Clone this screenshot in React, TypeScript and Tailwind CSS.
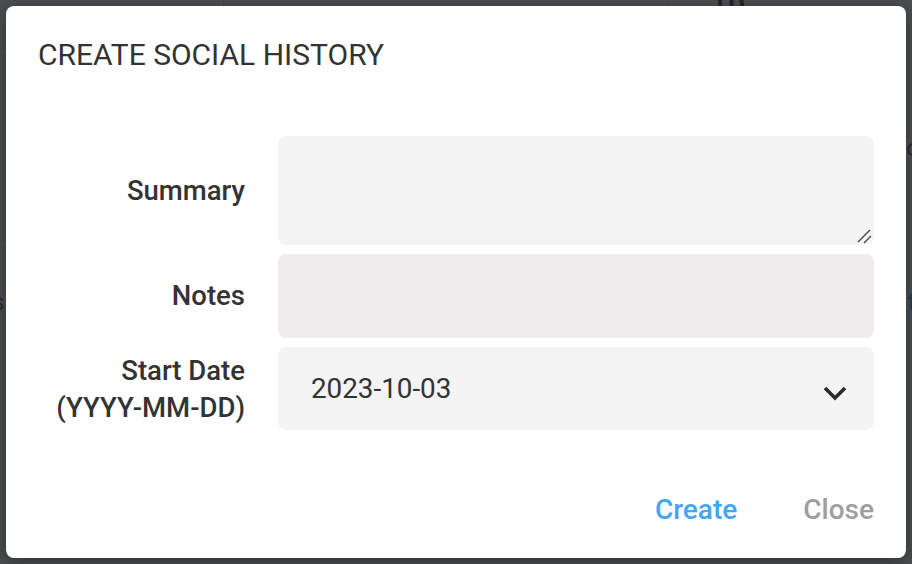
import { useState } from 'react';

const fields = [
  { label: 'Summary', kind: 'textarea', h: 'h-[109px]' },
  { label: 'Notes', kind: 'disabled', h: 'h-[84px]' },
];

function Chevron() {
  return (
    <svg width="26" height="16" viewBox="0 0 26 16" className="mt-[8px] text-[#2b2b2b]">
      <path d="M3 3 L13 13 L23 3" fill="none" stroke="currentColor" strokeWidth="3.6" />
    </svg>
  );
}

function Grip() {
  return (
    <svg width="16" height="16" viewBox="0 0 16 16" className="pointer-events-none absolute bottom-[1px] right-[2px] text-[#444444]">
      <path d="M2 14 L14 2 M8 15 L15 8" fill="none" stroke="currentColor" strokeWidth="1.4" />
    </svg>
  );
}

export default function App() {
  const [summary, setSummary] = useState('');

  return (
    <div className="relative h-[564px] w-[912px] overflow-hidden bg-[#4b4d51] font-['Roboto',sans-serif]">
      {/* page behind the backdrop */}
      <div className="absolute left-[223px] top-0 h-[6px] w-px bg-[#43454a]" />
      <div className="absolute left-[668px] top-0 h-[6px] w-px bg-[#43454a]" />
      <div className="absolute left-[712px] top-[-14px] text-[26px] font-bold text-[#232427]">TD</div>
      <div className="absolute left-0 top-[55px] h-px w-[6px] bg-[#45474b]" />
      <div className="absolute left-0 top-[240px] h-px w-[6px] bg-[#45474b]" />
      <div className="absolute left-[-8px] top-[284px] text-[24px] text-[#2d2e31]">s</div>
      <div className="absolute right-[-8px] top-[130px] text-[24px] text-[#2d2e31]">o</div>
      <div className="absolute right-[-4px] top-[284px] text-[24px] font-bold text-[#1e3d5c]">t</div>

      {/* dialog */}
      <div className="absolute inset-[6px] flex flex-col rounded-[8px] bg-white px-8 shadow-[0_4px_16px_rgba(0,0,0,0.35)]">
        <h2 className="pt-[33px] text-[30px] leading-[32px] font-normal text-[#333333]">
          CREATE SOCIAL HISTORY
        </h2>

        <div className="mt-[65px] grid grid-cols-[207px_1fr] gap-x-[33px] gap-y-[9px]">
          {fields.map((f) => (
            <div key={f.label} className="contents">
              <label className="flex items-center justify-end text-right text-[27.5px] font-medium text-[#333333]">
                {f.label}
              </label>
              {f.kind === 'textarea' ? (
                <div className="relative">
                  <textarea
                    value={summary}
                    onChange={(e) => setSummary(e.target.value)}
                    className={`${f.h} block w-full resize-none rounded-[8px] bg-[#f4f4f4] px-8 py-4 text-[27px] text-[#333333] outline-none`}
                  />
                  <Grip />
                </div>
              ) : (
                <div className={`${f.h} w-full rounded-[8px] bg-[#eeeced]`} />
              )}
            </div>
          ))}

          <label className="flex items-center justify-end text-right text-[27.5px] leading-[37px] font-medium text-[#333333]">
            Start Date
            <br />
            (YYYY-MM-DD)
          </label>
          <div className="flex h-[83px] w-full items-center justify-between rounded-[8px] bg-[#f4f4f4] pl-[33px] pr-[26px]">
            <span className="text-[27.8px] text-[#333333]">2023-10-03</span>
            <Chevron />
          </div>
        </div>

        <div className="mt-auto mb-[27px] flex justify-end gap-[66px]">
          <button className="text-[28px] font-medium text-[#42a5f5]">Create</button>
          <button className="text-[28px] font-medium text-[#9e9e9e]">Close</button>
        </div>
      </div>
    </div>
  );
}
